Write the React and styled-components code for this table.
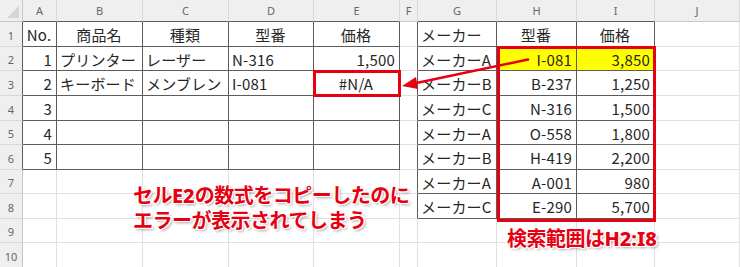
import React from "react";
import styled, { createGlobalStyle } from "styled-components";

const Global = createGlobalStyle`
  html, body { margin: 0; padding: 0; background: #fff; }
  body { font-family: "Noto Sans CJK JP", "Noto Sans", sans-serif; }
`;

const COLS = [
  { k: "A", w: 34 },
  { k: "B", w: 86 },
  { k: "C", w: 86 },
  { k: "D", w: 85 },
  { k: "E", w: 86 },
  { k: "F", w: 18 },
  { k: "G", w: 79 },
  { k: "H", w: 80 },
  { k: "I", w: 78 },
  { k: "J", w: 85 },
];
const ROW_H = [25, 24, 25, 25, 24, 25, 24, 25, 24, 25];

const DATA = {
  1: { A: ["No.", "c"], B: ["商品名", "c"], C: ["種類", "c"], D: ["型番", "c"], E: ["価格", "c"], G: ["メーカー", "l"], H: ["型番", "c"], I: ["価格", "c"] },
  2: { A: ["1", "r"], B: ["プリンター", "l"], C: ["レーザー", "l"], D: ["N-316", "l"], E: ["1,500", "r"], G: ["メーカーA", "l"], H: ["I-081", "r"], I: ["3,850", "r"] },
  3: { A: ["2", "r"], B: ["キーボード", "l"], C: ["メンブレン", "l"], D: ["I-081", "l"], E: ["#N/A", "c"], G: ["メーカーB", "l"], H: ["B-237", "r"], I: ["1,250", "r"] },
  4: { A: ["3", "r"], G: ["メーカーC", "l"], H: ["N-316", "r"], I: ["1,500", "r"] },
  5: { A: ["4", "r"], G: ["メーカーA", "l"], H: ["O-558", "r"], I: ["1,800", "r"] },
  6: { A: ["5", "r"], G: ["メーカーB", "l"], H: ["H-419", "r"], I: ["2,200", "r"] },
  7: { G: ["メーカーA", "l"], H: ["A-001", "r"], I: ["980", "r"] },
  8: { G: ["メーカーC", "l"], H: ["E-290", "r"], I: ["5,700", "r"] },
};

const isBoxed = (r, k) =>
  (r >= 1 && r <= 6 && "ABCDE".includes(k)) || (r >= 1 && r <= 8 && "GHI".includes(k));

const GRID = "#e0e0e0";
const DARK = "#5c5c5c";
const RED = "#e60012";

const Page = styled.div`
  position: relative;
  width: 740px;
  height: 267px;
  overflow: hidden;
`;

const Sheet = styled.div`
  display: grid;
  grid-template-columns: 23px ${COLS.map((c) => c.w + "px").join(" ")};
  grid-template-rows: 22px ${ROW_H.map((h) => h + "px").join(" ")};
`;

const Corner = styled.div`
  background: #efefef;
  border-right: 1px solid #c8c8c8;
  border-bottom: 1px solid #c8c8c8;
  box-sizing: border-box;
  display: flex;
  align-items: flex-end;
  justify-content: flex-end;
  padding: 0 3px 3px 0;
`;

const ColHead = styled.div`
  background: #efefef;
  color: #666;
  font-size: 11px;
  box-sizing: border-box;
  border-right: 1px solid #d8d8d8;
  border-bottom: 1px solid ${(p) => (p.$dark ? DARK : "#c8c8c8")};
  display: flex;
  align-items: center;
  justify-content: center;
  font-family: "Noto Sans", "Liberation Sans", sans-serif;
`;

const RowHead = styled.div`
  background: #efefef;
  color: #666;
  font-size: 11px;
  box-sizing: border-box;
  border-right: 1px solid ${(p) => (p.$dark ? DARK : "#c8c8c8")};
  border-bottom: 1px solid #d8d8d8;
  display: flex;
  align-items: center;
  justify-content: center;
  padding-top: 2px;
  font-family: "Noto Sans", "Liberation Sans", sans-serif;
`;

const Cell = styled.div`
  box-sizing: border-box;
  border-right: 1px solid ${(p) => (p.$darkR ? DARK : GRID)};
  border-bottom: 1px solid ${(p) => (p.$darkB ? DARK : GRID)};
  background: ${(p) => (p.$fill ? "#ffff00" : "#fff")};
  display: flex;
  align-items: center;
  justify-content: ${(p) => (p.$align === "r" ? "flex-end" : p.$align === "c" ? "center" : "flex-start")};
  padding: 1px 4px 0 3px;
  font-size: 15px;
  color: #262626;
  white-space: nowrap;
  overflow: hidden;
  letter-spacing: 0.2px;
`;

const Overlay = styled.svg`
  position: absolute;
  left: 0;
  top: 0;
  pointer-events: none;
`;

const Frame = styled.div`
  position: absolute;
  left: ${(p) => p.$x}px;
  top: ${(p) => p.$y}px;
  width: ${(p) => p.$w}px;
  height: ${(p) => p.$h}px;
  border: 3px solid ${RED};
  box-sizing: border-box;
`;

const Note = styled.div`
  position: absolute;
  left: ${(p) => p.$x}px;
  top: ${(p) => p.$y}px;
  display: flex;
  flex-direction: column;
  color: ${RED};
  font-size: 20px;
  font-weight: 700;
  line-height: 25px;
  white-space: nowrap;
  letter-spacing: -0.5px;
  text-shadow: 1px 0 0 #fff, -1px 0 0 #fff, 0 1px 0 #fff, 0 -1px 0 #fff,
    1px 1px 0 #fff, -1px -1px 0 #fff, 1px -1px 0 #fff, -1px 1px 0 #fff,
    2px 2px 3px rgba(0, 0, 0, 0.35);
`;

const NoteLine = styled.span`
  display: block;
  height: 25px;
`;

const Latin = styled.span`
  font-family: "Noto Sans", "Liberation Sans", sans-serif;
  font-weight: 800;
  letter-spacing: 0;
`;

export default function App() {
  const rows = [];
  ROW_H.forEach((_, i) => {
    const r = i + 1;
    rows.push(
      <RowHead key={"rh" + r} $dark={r <= 6}>
        {r}
      </RowHead>
    );
    COLS.forEach((c, ci) => {
      const next = COLS[ci + 1];
      const boxed = isBoxed(r, c.k);
      const darkR = boxed || (next && isBoxed(r, next.k));
      const darkB = boxed || isBoxed(r + 1, c.k);
      const d = DATA[r] && DATA[r][c.k];
      rows.push(
        <Cell
          key={c.k + r}
          $darkR={darkR}
          $darkB={darkB}
          $align={d ? d[1] : "l"}
          $fill={r === 2 && (c.k === "H" || c.k === "I")}
        >
          {d ? d[0] : ""}
        </Cell>
      );
    });
  });

  return (
    <>
      <Global />
      <Page>
        <Sheet>
          <Corner>
            <svg width="12" height="12" viewBox="0 0 12 12">
              <polygon points="12,0 12,12 0,12" fill="#d4d4d4" />
            </svg>
          </Corner>
          {COLS.map((c) => (
            <ColHead key={"ch" + c.k} $dark={isBoxed(1, c.k)}>
              {c.k}
            </ColHead>
          ))}
          {rows}
        </Sheet>

        <Frame $x={313} $y={70} $w={88} $h={27} />
        <Frame $x={497} $y={46} $w={159} $h={176} />

        <Overlay width="740" height="267" viewBox="0 0 740 267">
          <line x1="528" y1="59.5" x2="414" y2="83.5" stroke={RED} strokeWidth="2.6" strokeLinecap="round" />
          <polygon points="402,86 416,77 418,89" fill={RED} />
        </Overlay>

        <Note $x={133} $y={182}>
          <NoteLine>
            セル<Latin>E2</Latin>の数式をコピーしたのに
          </NoteLine>
          <NoteLine>エラーが表示されてしまう</NoteLine>
        </Note>
        <Note $x={507} $y={225}>
          <NoteLine>
            検索範囲は<Latin>H2:I8</Latin>
          </NoteLine>
        </Note>
      </Page>
    </>
  );
}
